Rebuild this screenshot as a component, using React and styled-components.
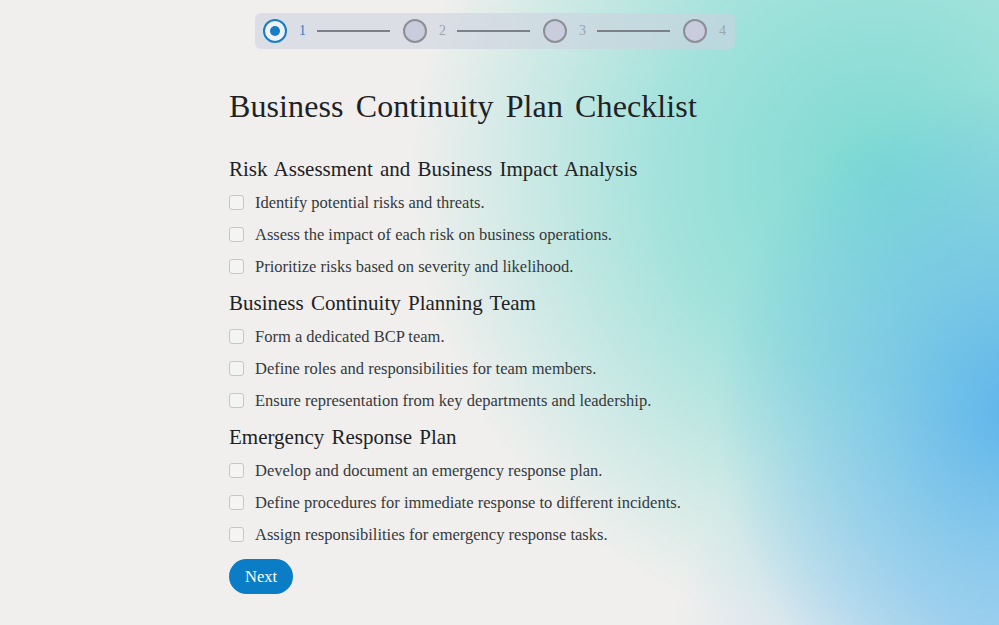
import React, { useState } from "react";
import styled, { createGlobalStyle } from "styled-components";

const GlobalStyle = createGlobalStyle`
  html, body {
    margin: 0;
    padding: 0;
  }
  body {
    font-family: "Liberation Serif", "DejaVu Serif", serif;
    color: #1f2326;
  }
`;

const Page = styled.div`
  min-height: 625px;
  box-sizing: border-box;
  padding-top: 13px;
  background:
    radial-gradient(ellipse 300px 330px at 1015px 410px, rgba(90, 178, 236, 0.95) 0%, rgba(100, 185, 236, 0.55) 45%, rgba(120, 190, 230, 0) 100%),
    radial-gradient(ellipse 330px 260px at 1000px 640px, rgba(150, 205, 240, 0.7) 0%, rgba(150, 205, 240, 0) 100%),
    radial-gradient(ellipse 470px 470px at 880px 170px, rgba(125, 218, 210, 1) 0%, rgba(128, 220, 212, 0.7) 45%, rgba(140, 222, 215, 0) 100%),
    #f0efed;
`;

const Column = styled.div`
  width: 540px;
  margin-left: calc(50% - 270.5px);
`;

const Stepper = styled.div`
  display: flex;
  align-items: center;
  width: fit-content;
  height: 36px;
  box-sizing: border-box;
  margin-left: calc(50% - 244.5px);
  padding: 0 9px 0 8px;
  border-radius: 6px;
  background: rgba(205, 210, 224, 0.6);
`;

const StepDot = styled.div`
  width: 24px;
  height: 24px;
  box-sizing: border-box;
  border-radius: 50%;
  flex-shrink: 0;
  border: 2px solid ${(p) => (p.$active ? "#1a7cc4" : "#8d8f96")};
  background: ${(p) => (p.$active ? "#eef1f6" : "#c9ccdc")};
  display: flex;
  align-items: center;
  justify-content: center;

  &::after {
    content: "";
    display: ${(p) => (p.$active ? "block" : "none")};
    width: 10px;
    height: 10px;
    border-radius: 50%;
    background: #1a7cc4;
  }
`;

const StepLabel = styled.span`
  font-size: 14px;
  margin-left: 12px;
  color: ${(p) => (p.$active ? "#2f7fc2" : "#9fa3aa")};
`;

const StepLine = styled.div`
  width: 73px;
  height: 2px;
  margin: 0 13px 0 11px;
  background: #7c8188;
`;

const Title = styled.h1`
  font-size: 32px;
  line-height: 40px;
  font-weight: 400;
  margin: 37px 0 29px;
  letter-spacing: 0.1px;
  word-spacing: 4px;
  color: #1e2224;
`;

const SectionTitle = styled.h2`
  font-size: 21px;
  line-height: 28px;
  font-weight: 400;
  margin: 0 0 3px;
  word-spacing: 2px;
  color: #1e2224;
`;

const Section = styled.section`
  margin-bottom: 7px;
`;

const Item = styled.label`
  display: flex;
  align-items: center;
  height: 32px;
  padding-top: 1px;
  box-sizing: border-box;
  font-size: 16.5px;
  color: #35393c;
  cursor: pointer;
`;

const Box = styled.input.attrs({ type: "checkbox" })`
  appearance: none;
  width: 15px;
  height: 15px;
  margin: 0 11px 0 0;
  border: 1px solid #c5c6c8;
  border-radius: 3px;
  background: #f4f4f3;
  box-sizing: border-box;

  &:checked {
    background: #0a7dc6;
    border-color: #0a7dc6;
  }
`;

const NextButton = styled.button`
  margin-top: 2px;
  height: 35px;
  padding: 0 16px;
  border: none;
  border-radius: 18px;
  background: #0a7dc6;
  color: #fff;
  font-family: inherit;
  font-size: 16.5px;
  cursor: pointer;
`;

const sections = [
  {
    title: "Risk Assessment and Business Impact Analysis",
    items: [
      "Identify potential risks and threats.",
      "Assess the impact of each risk on business operations.",
      "Prioritize risks based on severity and likelihood.",
    ],
  },
  {
    title: "Business Continuity Planning Team",
    items: [
      "Form a dedicated BCP team.",
      "Define roles and responsibilities for team members.",
      "Ensure representation from key departments and leadership.",
    ],
  },
  {
    title: "Emergency Response Plan",
    items: [
      "Develop and document an emergency response plan.",
      "Define procedures for immediate response to different incidents.",
      "Assign responsibilities for emergency response tasks.",
    ],
  },
];

export default function App() {
  const [step] = useState(1);

  return (
    <Page>
      <GlobalStyle />
      <Stepper>
        {[1, 2, 3, 4].map((n) => (
          <React.Fragment key={n}>
            <StepDot $active={n === step} />
            <StepLabel $active={n === step}>{n}</StepLabel>
            {n < 4 && <StepLine />}
          </React.Fragment>
        ))}
      </Stepper>
      <Column>
        <Title>Business Continuity Plan Checklist</Title>
        {sections.map((s) => (
          <Section key={s.title}>
            <SectionTitle>{s.title}</SectionTitle>
            {s.items.map((it) => (
              <Item key={it}>
                <Box />
                {it}
              </Item>
            ))}
          </Section>
        ))}
        <NextButton>Next</NextButton>
      </Column>
    </Page>
  );
}
